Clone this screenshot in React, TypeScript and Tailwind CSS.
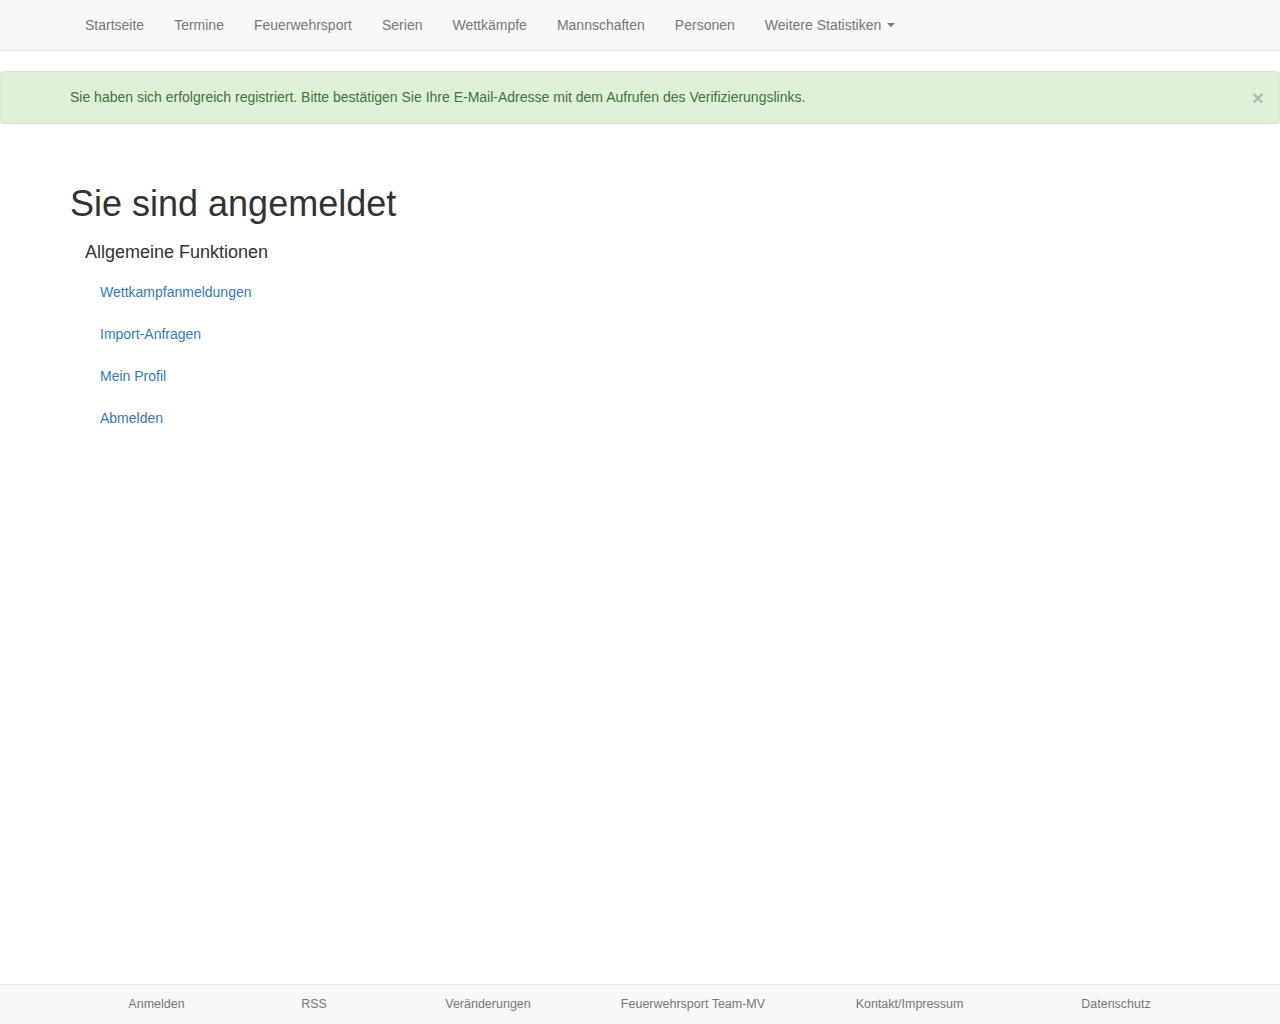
import React from "react";

const navItems = ["Startseite", "Termine", "Feuerwehrsport", "Serien", "Wettkämpfe", "Mannschaften", "Personen"];

const footerItems: { label: string; w: string }[] = [
  { label: "Anmelden", w: "w-[173px]" },
  { label: "RSS", w: "w-[142px]" },
  { label: "Veränderungen", w: "w-[206px]" },
  { label: "Feuerwehrsport Team-MV", w: "w-[204px]" },
  { label: "Kontakt/Impressum", w: "w-[229px]" },
  { label: "Datenschutz", w: "w-[184px]" },
];

export default function App() {
  return (
    <div
      className="min-h-screen flex flex-col bg-white text-[#333] text-[14px] leading-[20px]"
      style={{ fontFamily: '"Liberation Sans", Arial, Helvetica, sans-serif' }}
    >
      <nav className="h-[51px] bg-[#f8f8f8] border-b border-[#e7e7e7]">
        <ul className="flex pl-[70px]">
          {navItems.map((n) => (
            <li key={n}>
              <a className="block px-[15px] py-[15px] text-[#777] leading-[20px]" href="#">
                {n}
              </a>
            </li>
          ))}
          <li>
            <a className="flex items-center px-[15px] py-[15px] text-[#777] leading-[20px]" href="#">
              Weitere Statistiken
              <span className="ml-[6px] inline-block w-0 h-0 border-t-[4px] border-t-[#777] border-x-[4px] border-x-transparent" />
            </a>
          </li>
        </ul>
      </nav>

      <div className="mt-[20px] relative bg-[#dff0d8] border border-[#d6e9c6] rounded-[4px] text-[#3c763d] pt-[15px] pb-[16px] pl-[69px] pr-[35px]">
        Sie haben sich erfolgreich registriert. Bitte bestätigen Sie Ihre E-Mail-Adresse mit dem Aufrufen des Verifizierungslinks.
        <button className="absolute right-[15px] top-[15px] text-[21px] font-bold leading-[21px] text-black opacity-20">
          ×
        </button>
      </div>

      <main className="flex-1 px-[70px] pt-[60px]">
        <h1 className="text-[36px] leading-[40px] font-normal text-[#333]">Sie sind angemeldet</h1>
        <h2 className="mt-[18px] ml-[15px] text-[18px] leading-[20px] font-normal text-[#333]">
          Allgemeine Funktionen
        </h2>
        <ul className="mt-[20px] ml-[30px] flex flex-col gap-[22px]">
          {["Wettkampfanmeldungen", "Import-Anfragen", "Mein Profil", "Abmelden"].map((l) => (
            <li key={l}>
              <a className="text-[#337ab7]" href="#">
                {l}
              </a>
            </li>
          ))}
        </ul>
      </main>

      <footer className="h-[40px] bg-[#f8f8f8] border-t border-[#e7e7e7] flex items-center pl-[70px] pb-[2px]">
        {footerItems.map((f) => (
          <div key={f.label} className={`${f.w} text-center text-[12.5px] text-[#777]`}>
            {f.label}
          </div>
        ))}
      </footer>
    </div>
  );
}
